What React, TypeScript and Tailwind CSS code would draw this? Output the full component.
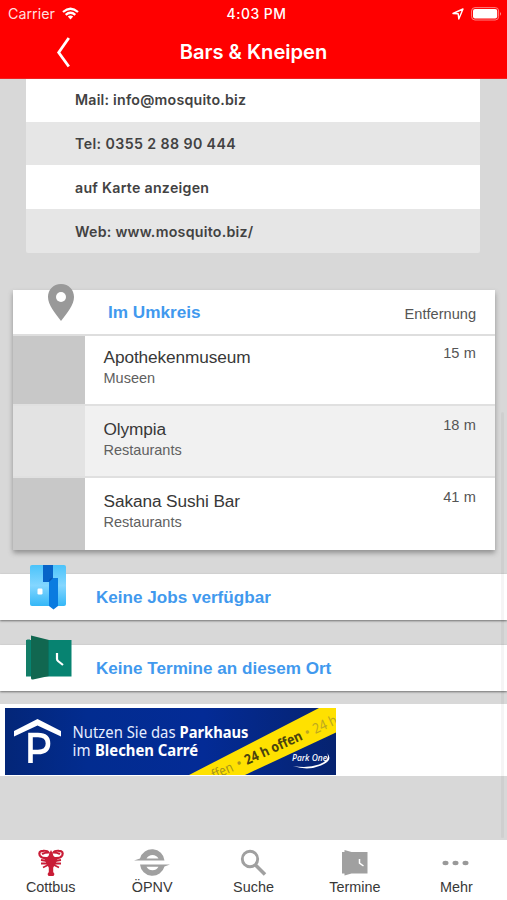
import type { ReactNode } from "react";

const contacts = [
  { label: "Mail: info@mosquito.biz", className: "h-[43px] bg-white pb-[2px] tracking-[0.22px]" },
  { label: "Tel: 0355 2 88 90 444", className: "h-[43px] bg-[#e6e6e6] tracking-[0.4px]" },
  { label: "auf Karte anzeigen", className: "h-[44px] bg-white pt-px tracking-[0.27px]" },
  { label: "Web: www.mosquito.biz/", className: "h-[44px] bg-[#e6e6e6] rounded-b-[2px] pt-px tracking-[0.26px]" },
];

const places = [
  { name: "Apothekenmuseum", type: "Museen", distance: "15 m" },
  { name: "Olympia", type: "Restaurants", distance: "18 m" },
  { name: "Sakana Sushi Bar", type: "Restaurants", distance: "41 m" },
];

const WifiIcon = () => (
  <svg width="17" height="13" viewBox="0 0 17 13" fill="none" stroke="#fff" strokeWidth="2.3">
    <path d="M1 5 Q8.5 -1.6 16 5" />
    <path d="M3.7 7.9 Q8.5 3.7 13.3 7.9" />
    <path d="M5.8 9.6 Q8.5 7.4 11.2 9.6 L8.5 12.4Z" fill="#fff" stroke="none" />
  </svg>
);

const LocationIcon = () => (
  <svg width="12" height="12" viewBox="0 0 12 12" fill="none" stroke="#fff" strokeWidth="1.4" strokeLinejoin="round">
    <path d="M1 5.5 L11 1 L6.8 11 L6.2 5.8Z" />
  </svg>
);

const BatteryIcon = () => (
  <svg width="31" height="14" viewBox="0 0 31 14">
    <rect x="0.6" y="0.6" width="27" height="12.4" rx="3.4" fill="none" stroke="#ff8080" strokeWidth="1" />
    <rect x="2" y="2" width="24.2" height="9.6" rx="2" fill="#fff" />
    <path d="M29 5 Q31 6.8 29 8.8Z" fill="#ff9090" />
  </svg>
);

const Header = () => (
  <header className="h-[79px] bg-[#ff0000] text-white border-b border-[#ef2222] font-['Inter',sans-serif]">
    <div className="grid grid-cols-3 items-center h-[27px] pl-[8px] pr-[5px]">
      <div className="flex items-center gap-[7px] text-[14.3px] text-[#ffdede]">
        <span>Carrier</span>
        <WifiIcon />
      </div>
      <span className="pl-[3px] pt-px text-center text-[13.9px] font-medium tracking-[0.5px]">4:03 PM</span>
      <div className="flex items-center justify-end gap-[7px]">
        <LocationIcon />
        <BatteryIcon />
      </div>
    </div>
    <div className="grid grid-cols-[80px_1fr_80px] items-center h-[50px]">
      <svg className="ml-[56px]" width="15" height="32" viewBox="0 0 15 32" fill="none" stroke="#fff" strokeWidth="2.8">
        <path d="M12.8 2 L2.7 16.5 L12.8 30.5" />
      </svg>
      <h1 className="pt-px text-center text-[20.1px] font-semibold">Bars &amp; Kneipen</h1>
    </div>
  </header>
);

const NoticeBar = ({ label, icon }: { label: string; icon: ReactNode }) => (
  <div className="relative h-[46px] bg-white flex items-center pl-[96px] pt-[2px] shadow-[0_1px_2px_#707070]">
    <div className="absolute left-[25px] -top-[10px]">{icon}</div>
    <span className="text-[17.1px] font-bold text-[#4199ee]">{label}</span>
  </div>
);

const JobsIcon = () => (
  <svg width="48" height="46" viewBox="0 0 48 46">
    <defs>
      <linearGradient id="jobs" x2="0" y2="1">
        <stop stopColor="#4bc3fa" />
        <stop offset=".5" stopColor="#83d6ff" />
        <stop offset="1" stopColor="#35b7f7" />
      </linearGradient>
    </defs>
    <rect x="5" y="1" width="36" height="41" rx="2" fill="url(#jobs)" />
    <path d="M18 1h10v14h-3v3h-7z" fill="#0864c8" />
    <path d="M24 17q0-3 3-3h6v28l-4.5 3.5L24 42z" fill="#0a7be0" />
    <path d="M24 17q0-3 3-3h1l-4 4z" fill="#0752af" />
    <rect x="12.5" y="24.5" width="5" height="6" rx="1.2" fill="#fff" />
  </svg>
);

const DateIcon = () => (
  <svg width="48" height="46" viewBox="0 0 48 46">
    <path d="M1 5h45.5v36.5H1z" fill="#078371" />
    <path d="M1 6q0-1.5 1.5-1.5H5V41H2.5Q1 41 1 39.5z" fill="#137d67" />
    <path d="M6 .5L24 5v36L8 44.5q-2 .4-2-1.5z" fill="#116750" />
    <path d="M23.5 5v36" stroke="#087260" />
    <path d="M32 18v6q0 1.2 1 2l5 4" fill="none" stroke="#fff" strokeWidth="2.2" />
  </svg>
);

const Banner = () => (
  <svg className="block font-['Noto_Sans','Open_Sans',sans-serif]" width="331" height="67" viewBox="0 0 331 67">
    <defs>
      <linearGradient id="banner">
        <stop stopColor="#032678" />
        <stop offset=".25" stopColor="#022c90" />
        <stop offset=".6" stopColor="#032b96" />
        <stop offset="1" stopColor="#062370" />
      </linearGradient>
      <clipPath id="frame">
        <path d="M0 0h331v67H0z" />
      </clipPath>
    </defs>
    <path d="M0 0h331v67H0z" fill="url(#banner)" />
    <path d="M9 23L32.5 11L56 23v5.5L32.5 17.5L9 28.5z" fill="#fff" />
    <path d="M25.5 55V27h7.5q10 0 10 8.5t-10 8.5h-7" fill="none" stroke="#fff" strokeWidth="4.6" />
    <text fill="#fff" fontSize="15.8">
      <tspan x="67.5" y="29.5" fill="#e6edff" textLength="103" lengthAdjust="spacingAndGlyphs">Nutzen Sie das</tspan>
      <tspan x="174.5" y="29.5" fontWeight="700" textLength="69" lengthAdjust="spacingAndGlyphs">Parkhaus</tspan>
      <tspan x="67.5" y="48" fill="#e6edff" textLength="18" lengthAdjust="spacingAndGlyphs">im</tspan>
      <tspan x="90" y="48" fontWeight="700" textLength="103" lengthAdjust="spacingAndGlyphs">Blechen Carré</tspan>
    </text>
    <g clipPath="url(#frame)">
      <path d="M184 67L314 0h17v24.5L240 67z" fill="#ffe100" />
      <text transform="translate(242 57) rotate(-24.5)" fill="#a8951c" fontSize="14">
        <tspan x="-36" textLength="22" lengthAdjust="spacingAndGlyphs">ffen</tspan>
        <tspan x="-9">•</tspan>
        <tspan x="0" fill="#4a430f" fontWeight="700" textLength="62" lengthAdjust="spacingAndGlyphs">24 h offen</tspan>
        <tspan x="66" fill="#bca821">•</tspan>
        <tspan x="75" fill="#bca821" textLength="36" lengthAdjust="spacingAndGlyphs">24 h o</tspan>
      </text>
    </g>
    <text x="287" y="53" fill="#fff" fontSize="8.8" fontStyle="italic" fontWeight="500" textLength="35" lengthAdjust="spacingAndGlyphs">Park One</text>
    <path d="M322 45q7 7-6 12.5-13 5.5-28 .5 15 2.5 26-1.5 12-5 8-11.5z" fill="#fff" />
  </svg>
);

const Tab = ({ label, children }: { label: string; children: ReactNode }) => (
  <div className="flex flex-1 flex-col items-center pt-[9px]">
    <div className="h-[28px]">{children}</div>
    <span className="text-[14.4px] leading-[20px]">{label}</span>
  </div>
);

const TabBar = () => (
  <nav className="flex h-[60px] bg-white text-[#383838] shrink-0">
    <Tab label="Cottbus">
      <svg width="28" height="28" viewBox="0 0 28 28" fill="#c91c36" stroke="#c91c36">
        <path
          d="M12 9Q5 10 2.8 6.5Q1 2 6 1.8Q10.500 1.500 11.500 3.500Q8 3.500 5 5M16 9Q23 10 25.200 6.500Q27 2 22 1.800Q17.500 1.500 16.500 3.500Q20 3.500 23 5"
          fill="none"
          strokeWidth="2.2"
        />
        <path d="M11.500 7l1-3L14 1l1.500 3 1 3 4 3-2 5-2 3-1.500 2h-2l-1.500-2-2-3-2-5z" stroke="none" />
        <path d="M4 11l6 1M24 11l-6 1M4 14.500h7M24 14.500h-7M6 18.500l6-3M22 18.500l-6-3" strokeWidth="1.8" />
        <path d="M14 18v7" strokeWidth="4.4" />
        <path d="M10.500 25l1.500-2h4l1.500 2-1 2h-5z" stroke="none" />
      </svg>
    </Tab>
    <Tab label="ÖPNV">
      <svg width="40" height="28" viewBox="0 0 40 28" fill="#a0a0a0">
        <path d="M2 11.5L8 9.500A12.500 12.500 0 0 1 32.500 11.500zM14.500 9.500h12Q24.500 6 20.500 6t-6 3.500z" fillRule="evenodd" />
        <path d="M8 15.500H38L32.500 17.500A12.500 12.500 0 0 1 8 15.500zM14.500 17.800Q16.500 21.300 20.500 21.300t6-3.500z" fillRule="evenodd" />
      </svg>
    </Tab>
    <Tab label="Suche">
      <svg width="28" height="28" viewBox="0 0 28 28" fill="none" stroke="#a0a0a0" strokeWidth="2.9">
        <circle cx="10" cy="10" r="7.7" />
        <path d="M15.5 16L25 25.5" strokeWidth="3.5" />
      </svg>
    </Tab>
    <Tab label="Termine">
      <svg width="28" height="28" viewBox="0 0 28 28">
        <path d="M1 3H3.5V1L10.5 3h16v21.5h-16L3.500 26.500v-2H1z" fill="#a0a0a0" />
        <path d="M18.5 10v4l4 3" fill="none" stroke="#fff" strokeWidth="1.5" />
      </svg>
    </Tab>
    <Tab label="Mehr">
      <svg width="28" height="28" viewBox="0 0 28 28" fill="#999">
        <ellipse cx="3.5" cy="14" rx="3" ry="2.2" />
        <ellipse cx="13.5" cy="14" rx="3" ry="2.2" />
        <ellipse cx="23.5" cy="14" rx="3" ry="2.2" />
      </svg>
    </Tab>
  </nav>
);

const App = () => {
  return (
    <div className="relative flex flex-col w-[507px] h-[900px] overflow-hidden bg-[#d8d8d8] font-['Liberation_Sans',Arial,sans-serif]">
      <Header />
      <main className="flex-1">
        <section className="ml-[26px] w-[454px] text-[14.2px] font-semibold text-[#424242] font-['Inter',sans-serif]">
          {contacts.map(({ label, className }) => (
            <div key={label} className={`flex items-center pl-[49px] ${className}`}>
              {label}
            </div>
          ))}
        </section>

        <section className="mt-[37px] ml-[13px] w-[482px] h-[260px] bg-white shadow-[0_3px_5px_#909090]">
          <div className="relative flex items-center justify-between h-[46px] pl-[95px] pr-[19px] border-b-2 border-[#dedede]">
            <svg className="absolute left-[34px] -top-[7px]" width="28" height="39" viewBox="0 0 28 39">
              <path d="M14 1C6 1 1 7 1 14c0 8 7 16 13 24 6-8 13-16 13-24C27 7 22 1 14 1z" fill="#999" />
              <circle cx="14" cy="14" r="5" fill="#fff" />
            </svg>
            <h2 className="pt-[2px] text-[17.2px] font-bold text-[#4199ee]">Im Umkreis</h2>
            <span className="mt-[5px] text-[14.6px] text-[#555]">Entfernung</span>
          </div>
          {places.map(({ name, type, distance }, i) => (
            <div
              key={name}
              className={`flex ${i === 0 ? "h-[70px]" : "h-[72px] *:pt-[2px]"} ${i < 2 ? "border-b-2 border-[#e0e0e0]" : ""} ${i === 1 ? "bg-[#f1f1f1]" : "bg-white"}`}
            >
              <div className={`w-[72px] ${i === 1 ? "bg-[#e3e3e3]" : "bg-[#c8c8c8]"}`} />
              <div className="flex flex-1 justify-between pl-[18.5px] pr-[19px]">
                <div className="pt-[10px]">
                  <h3 className="text-[17.25px] leading-[22px] tracking-[-0.1px] text-[#383838]">{name}</h3>
                  <p className="text-[14.5px] leading-[21px] text-[#606060]">{type}</p>
                </div>
                <span className="pt-[7px] text-[14.6px] leading-[20px] tracking-[0.1px] text-[#555]">{distance}</span>
              </div>
            </div>
          ))}
        </section>

        <div className="mt-[24px]">
          <NoticeBar label="Keine Jobs verfügbar" icon={<JobsIcon />} />
        </div>
        <div className="mt-[25px]">
          <NoticeBar label="Keine Termine an diesem Ort" icon={<DateIcon />} />
        </div>
        <div className="mt-[13px] h-[72px] bg-white pt-[4px] pl-[5px]">
          <Banner />
        </div>
      </main>
      <TabBar />
      <div className="absolute right-[3px] top-[412px] h-[426px] w-[3px] rounded bg-black/4" />
    </div>
  );
};

export default App;
